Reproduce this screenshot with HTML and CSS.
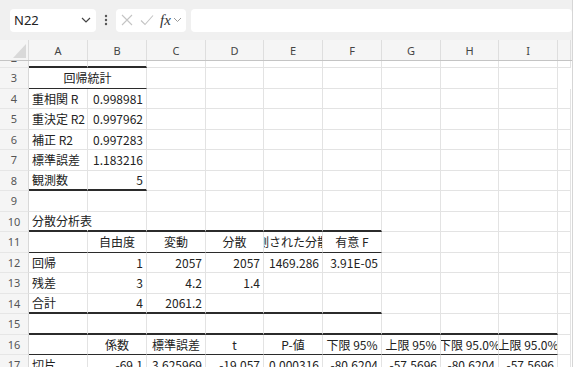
FILE: index.html
```html
<!DOCTYPE html>
<html lang="ja">
<head>
    <meta charset="UTF-8">
    <title>Sheet1</title>
    <link rel="stylesheet" href="styles.css">
</head>
<body>
<div class="app">
    <div class="toolbar">
        <div class="namebox">
            <span>N22</span>
            <svg width="10" height="6" viewBox="0 0 10 6"><path d="M1 1l4 4 4-4" fill="none" stroke="#444" stroke-width="1.2"/></svg>
        </div>
        <svg class="dots" width="4" height="12" viewBox="0 0 4 12"><circle cx="2" cy="2" r="1.2"/><circle cx="2" cy="6" r="1.2"/><circle cx="2" cy="10" r="1.2"/></svg>
        <div class="fxbox">
            <svg width="12" height="12" viewBox="0 0 12 12"><path d="M1 1l10 10M11 1L1 11" stroke="#c4c4c4" stroke-width="1.1"/></svg>
            <svg width="14" height="12" viewBox="0 0 14 12"><path d="M1 6.5l4 4L13 1.5" fill="none" stroke="#c4c4c4" stroke-width="1.1"/></svg>
            <span class="fx">fx</span>
            <svg width="9" height="6" viewBox="0 0 9 6"><path d="M1 1l3.5 3.5L8 1" fill="none" stroke="#999" stroke-width="1"/></svg>
        </div>
        <div class="formula"></div>
    </div>

    <div class="colheads">
        <div class="corner"><span class="tri"></span></div>
        <div class="ch">A</div><div class="ch">B</div><div class="ch">C</div><div class="ch">D</div><div class="ch">E</div>
        <div class="ch">F</div><div class="ch">G</div><div class="ch">H</div><div class="ch">I</div><div class="ch"></div>
    </div>

    <div class="sheet">
        <div class="rows">
            <div class="row">
                <div class="rh">2</div>
                <div class="c bb2"></div><div class="c bb2"></div><div class="c"></div><div class="c"></div><div class="c"></div>
                <div class="c"></div><div class="c"></div><div class="c"></div><div class="c"></div><div class="c"></div>
            </div>
            <div class="row">
                <div class="rh">3</div>
                <div class="c mid span2 bb1"><span>回帰統計</span></div><div class="c"></div><div class="c"></div>
                <div class="c"></div><div class="c"></div><div class="c"></div><div class="c"></div><div class="c"></div>
            </div>
            <div class="row">
                <div class="rh">4</div>
                <div class="c"><span>重相関 R</span></div><div class="c num"><span>0.998981</span></div><div class="c"></div><div class="c"></div><div class="c"></div>
                <div class="c"></div><div class="c"></div><div class="c"></div><div class="c"></div><div class="c"></div>
            </div>
            <div class="row">
                <div class="rh">5</div>
                <div class="c"><span>重決定 R2</span></div><div class="c num"><span>0.997962</span></div><div class="c"></div><div class="c"></div><div class="c"></div>
                <div class="c"></div><div class="c"></div><div class="c"></div><div class="c"></div><div class="c"></div>
            </div>
            <div class="row">
                <div class="rh">6</div>
                <div class="c"><span>補正 R2</span></div><div class="c num"><span>0.997283</span></div><div class="c"></div><div class="c"></div><div class="c"></div>
                <div class="c"></div><div class="c"></div><div class="c"></div><div class="c"></div><div class="c"></div>
            </div>
            <div class="row">
                <div class="rh">7</div>
                <div class="c"><span>標準誤差</span></div><div class="c num"><span>1.183216</span></div><div class="c"></div><div class="c"></div><div class="c"></div>
                <div class="c"></div><div class="c"></div><div class="c"></div><div class="c"></div><div class="c"></div>
            </div>
            <div class="row">
                <div class="rh">8</div>
                <div class="c bb2"><span>観測数</span></div><div class="c num bb2"><span>5</span></div><div class="c"></div><div class="c"></div><div class="c"></div>
                <div class="c"></div><div class="c"></div><div class="c"></div><div class="c"></div><div class="c"></div>
            </div>
            <div class="row">
                <div class="rh">9</div>
                <div class="c"></div><div class="c"></div><div class="c"></div><div class="c"></div><div class="c"></div>
                <div class="c"></div><div class="c"></div><div class="c"></div><div class="c"></div><div class="c"></div>
            </div>
            <div class="row">
                <div class="rh">10</div>
                <div class="c spill bb2"><span>分散分析表</span></div><div class="c bb2"></div><div class="c bb2"></div><div class="c bb2"></div><div class="c bb2"></div>
                <div class="c bb2"></div><div class="c"></div><div class="c"></div><div class="c"></div><div class="c"></div>
            </div>
            <div class="row">
                <div class="rh">11</div>
                <div class="c bb1"></div><div class="c mid bb1"><span>自由度</span></div><div class="c mid bb1"><span>変動</span></div><div class="c mid bb1"><span>分散</span></div><div class="c mid bb1"><span>観測された分散比</span></div>
                <div class="c mid bb1"><span>有意 F</span></div><div class="c"></div><div class="c"></div><div class="c"></div><div class="c"></div>
            </div>
            <div class="row">
                <div class="rh">12</div>
                <div class="c"><span>回帰</span></div><div class="c num"><span>1</span></div><div class="c num"><span>2057</span></div><div class="c num"><span>2057</span></div><div class="c num"><span>1469.286</span></div>
                <div class="c num"><span>3.91E-05</span></div><div class="c"></div><div class="c"></div><div class="c"></div><div class="c"></div>
            </div>
            <div class="row">
                <div class="rh">13</div>
                <div class="c"><span>残差</span></div><div class="c num"><span>3</span></div><div class="c num"><span>4.2</span></div><div class="c num"><span>1.4</span></div><div class="c"></div>
                <div class="c"></div><div class="c"></div><div class="c"></div><div class="c"></div><div class="c"></div>
            </div>
            <div class="row">
                <div class="rh">14</div>
                <div class="c bb2"><span>合計</span></div><div class="c num bb2"><span>4</span></div><div class="c num bb2"><span>2061.2</span></div><div class="c bb2"></div><div class="c bb2"></div>
                <div class="c bb2"></div><div class="c"></div><div class="c"></div><div class="c"></div><div class="c"></div>
            </div>
            <div class="row">
                <div class="rh">15</div>
                <div class="c bb2"></div><div class="c bb2"></div><div class="c bb2"></div><div class="c bb2"></div><div class="c bb2"></div>
                <div class="c bb2"></div><div class="c bb2"></div><div class="c bb2"></div><div class="c bb2"></div><div class="c"></div>
            </div>
            <div class="row">
                <div class="rh">16</div>
                <div class="c bb1"></div><div class="c mid bb1"><span>係数</span></div><div class="c mid bb1"><span>標準誤差</span></div><div class="c mid bb1"><span>t</span></div><div class="c mid bb1"><span>P-値</span></div>
                <div class="c mid bb1"><span>下限 95%</span></div><div class="c mid bb1"><span>上限 95%</span></div><div class="c mid bb1"><span>下限 95.0%</span></div><div class="c mid bb1"><span>上限 95.0%</span></div><div class="c"></div>
            </div>
            <div class="row">
                <div class="rh">17</div>
                <div class="c"><span>切片</span></div><div class="c num"><span>-69.1</span></div><div class="c num"><span>3.625969</span></div><div class="c num"><span>-19.057</span></div><div class="c num"><span>0.000316</span></div>
                <div class="c num"><span>-80.6204</span></div><div class="c num"><span>-57.5696</span></div><div class="c num"><span>-80.6204</span></div><div class="c num"><span>-57.5696</span></div><div class="c"></div>
            </div>
        </div>
    </div>
</div>
</body>
</html>
```

FILE: styles.css
```css
body {
    margin: 0;
    background-color: #ffffff;
    font-family: "Noto Sans CJK JP", "Noto Sans", sans-serif;
    color: #222222;
}
.app {
    width: 572px;
    height: 367px;
    overflow: hidden;
    border-right: 1px solid #d6d6d6;
}
.toolbar {
    display: flex;
    align-items: center;
    gap: 5px;
    height: 40px;
    padding: 0 0 0 10px;
    background-color: #f0f0f0;
    box-sizing: border-box;
}
.namebox {
    display: flex;
    align-items: center;
    justify-content: space-between;
    width: 86px;
    height: 23px;
    padding: 0 5px 0 4px;
    box-sizing: border-box;
    background-color: #ffffff;
    border-radius: 4px;
    font-family: "Noto Sans", sans-serif;
    font-size: 13px;
}
.dots {
    fill: #555555;
    margin: 0 3px;
}
.fxbox {
    display: flex;
    align-items: center;
    gap: 7px;
    width: 70px;
    height: 23px;
    padding: 0 4px 0 5px;
    box-sizing: border-box;
    background-color: #ffffff;
    border-radius: 4px;
}
.fxbox .fx {
    font-family: "Liberation Serif", serif;
    font-style: italic;
    font-size: 15px;
    color: #333333;
    margin-left: -1px;
    margin-right: -5px;
}
.formula {
    flex: 1;
    height: 23px;
    background-color: #ffffff;
    border-radius: 4px;
}
.colheads,
.row {
    display: grid;
    grid-template-columns: 29px 59px 59px 59px 58px 59px 59px 59px 58px 59px 13px;
}
.colheads {
    height: 20px;
    background-color: #f5f5f5;
    border-bottom: 1px solid #c4c4c4;
}
.corner {
    position: relative;
    border-right: 1px solid #dcdcdc;
}
.corner .tri {
    position: absolute;
    right: 2px;
    bottom: 2px;
    width: 0;
    height: 0;
    border-left: 13px solid transparent;
    border-bottom: 14px solid #d9d9d9;
}
.ch {
    display: flex;
    align-items: center;
    justify-content: center;
    font-family: "Noto Sans", sans-serif;
    font-size: 11px;
    color: #444444;
    border-right: 1px solid #dedede;
}
.sheet {
    height: 307px;
    overflow: hidden;
}
.rows {
    margin-top: -13.5px;
}
.row {
    height: 20.5px;
}
.rh {
    display: flex;
    align-items: center;
    justify-content: center;
    background-color: #f5f5f5;
    border-bottom: 1px solid #e6e6e6;
    border-right: 1px solid #d8d8d8;
    font-family: "Noto Sans", sans-serif;
    font-size: 11px;
    color: #555555;
}
.c {
    display: flex;
    align-items: center;
    min-width: 0;
    padding: 0 3px;
    box-sizing: border-box;
    border-right: 1px solid #e3e3e3;
    border-bottom: 1px solid #e3e3e3;
    font-size: 12px;
    white-space: nowrap;
    overflow: hidden;
}
.c.num {
    justify-content: flex-end;
}
.c.mid {
    justify-content: center;
    padding: 0;
}
.c.span2 {
    grid-column: span 2;
}
.c.spill {
    overflow: visible;
    border-right-color: transparent;
}
.c.bb1 {
    border-bottom: 1px solid #2b2b2b;
}
.c.bb2 {
    border-bottom: 2px solid #2b2b2b;
}
```
